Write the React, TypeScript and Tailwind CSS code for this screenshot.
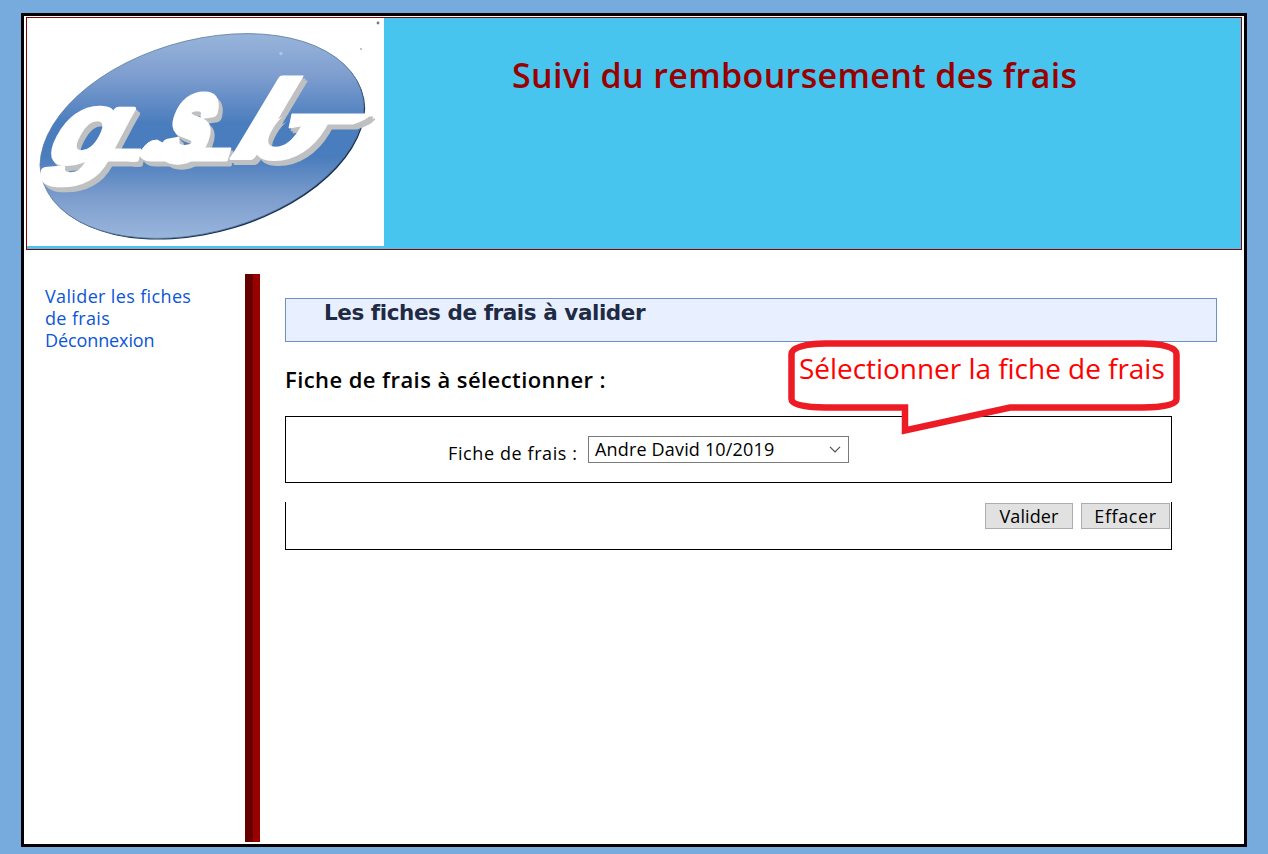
import type { ReactNode } from "react";

const linkClass = "text-[#0b55d9] hover:underline";

const ovalPath = "M13 147A166 97.5 -15.6 0 1 337 89A166 97.5 -15.6 0 1 13 147Z";

function Logo() {
  const letters = (
    <g fontFamily="'Liberation Sans', sans-serif" fontWeight="bold" strokeLinejoin="round">
      <text transform="translate(14 145) skewX(-28) scale(1.38 1.2)" fontSize="84" strokeWidth="5">g</text>
      <text transform="translate(130 141) skewX(-20) scale(0.9 1.3)" fontSize="90" strokeWidth="7">s</text>
      <g clipPath="url(#bowl)">
        <text transform="translate(196 140) skewX(-31) scale(1.3 1)" fontSize="111" strokeWidth="4">b</text>
      </g>
    </g>
  );
  const swashes = (
    <g strokeWidth="1">
      <path d="M84 131H114L111 143Q105 144 101 143H76Z" />
      <path d="M112 137Q119 122 130 122L145 130H204L200 143H124Q116 143 112 137Z" />
      <path d="M265 96H344Q341 101 326 106H285L262 110Z" />
    </g>
  );
  return (
    <svg viewBox="0 0 357 228" className="block h-[228px] w-[357px] bg-white" role="img" aria-label="gsb">
      <defs>
        <linearGradient id="oval" gradientUnits="userSpaceOnUse" x1="0" y1="14" x2="0" y2="222">
          <stop offset="0" stopColor="#98b5da" />
          <stop offset="0.2" stopColor="#809fd0" />
          <stop offset="0.44" stopColor="#4a7dbd" />
          <stop offset="0.6" stopColor="#4a7dbd" />
          <stop offset="0.8" stopColor="#7d9dcd" />
          <stop offset="1" stopColor="#9ab7dc" />
        </linearGradient>
        <clipPath id="bowl">
          <path d="M190 150V125L225 45H284.5L251 101L262 96H330V150Z" />
        </clipPath>
      </defs>
      <path d={ovalPath} fill="#142f55" transform="translate(1.2 1.2)" />
      <path d={ovalPath} fill="url(#oval)" stroke="#58799f" strokeWidth="0.8" />
      <g fill="#bfc0c2" stroke="#bfc0c2" transform="translate(4 5)">{letters}{swashes}</g>
      <g fill="#bfc0c2" stroke="#bfc0c2" transform="translate(2 3)">{letters}{swashes}</g>
      <g fill="#fff" stroke="#fff">{letters}{swashes}</g>
      <circle cx="351" cy="5" r="1.4" fill="#777" />
      <circle cx="334" cy="31" r="0.9" fill="#aaa" />
      <circle cx="254" cy="35.5" r="1.7" fill="#a9c8e6" />
    </svg>
  );
}

function FormButton({ children, className }: { children: ReactNode; className: string }) {
  return (
    <button className={`flex h-[26px] items-center justify-center border border-[#adadad] bg-[#e1e1e1] pb-px text-[18px] leading-none whitespace-nowrap ${className}`}>
      {children}
    </button>
  );
}

export default function App() {
  return (
    <div className="h-[854px] w-[1268px] overflow-hidden bg-[#77aadd] pt-[13px] pl-[21px] font-['Open_Sans','Noto_Sans',sans-serif] text-[18px] text-black">
      <div className="flex h-[834px] w-[1226px] flex-col border-[3px] border-black bg-white px-[2px] pt-px pb-[2px]">
        <header className="flex h-[233px] shrink-0 border border-[#8b0000] bg-[#48c5ee]">
          <Logo />
          <h1 className="ml-[128px] h-fit pt-[33px] text-[34px] leading-[48px] font-semibold tracking-[0.37px] whitespace-nowrap text-[#990000]">
            Suivi du remboursement des frais
          </h1>
        </header>

        <div className="mt-6 flex min-h-0 flex-1">
          <nav className="w-[219px] shrink-0 pt-[11px] pl-[19px] leading-[22px] whitespace-nowrap">
            <a className={`${linkClass} tracking-[0.36px]`}>Valider les fiches<br />de frais</a>
            <br />
            <a className={`${linkClass} tracking-[-0.1px]`}>Déconnexion</a>
          </nav>
          <div className="w-[15px] shrink-0 border-l-8 border-[#660000] bg-[#990000]" />

          <main className="relative ml-[25px] w-[932px] pt-6">
            <h2 className="h-11 border border-[#6f8fc5] bg-[#e8f0ff] pl-[38px] font-['DejaVu_Sans',sans-serif] text-[21.5px] leading-[28px] font-bold tracking-[-0.43px] whitespace-nowrap text-[#1f2a44]">
              Les fiches de frais à valider
            </h2>
            <h3 className="mt-[23px] h-[28px] text-[22px] leading-[28px] font-semibold tracking-[0.43px] whitespace-nowrap">
              Fiche de frais à sélectionner :
            </h3>
            <div className="mt-[23px] flex h-[67px] w-[887px] border border-black pt-[19px] pl-[162px]">
              <label className="w-[140px] pt-[5px] leading-[24px] tracking-[0.6px] whitespace-nowrap">Fiche de frais :</label>
              <button className="flex h-[27px] w-[261px] items-center justify-between border border-[#7a7a7a] bg-white pr-[7px] pl-[6px] leading-[25px] tracking-[0.17px] whitespace-nowrap">
                <span>Andre David 10/2019</span>
                <svg className="h-[7px] w-3" viewBox="0 0 12 7" fill="none" stroke="#505050" strokeWidth="1.2">
                  <path d="M1 .8 6 5.8 11 .8" />
                </svg>
              </button>
            </div>
            <div className="mt-[19px] flex h-[48px] w-[887px] justify-end gap-2 border-x border-b border-black pt-px pr-px">
              <FormButton className="w-[88px] tracking-[0.1px]">Valider</FormButton>
              <FormButton className="w-[89px] tracking-[0.6px]">Effacer</FormButton>
            </div>

            <div className="absolute top-[66px] left-[503px] h-[96px] w-[394px]">
              <svg className="absolute inset-0" width="394" height="96" viewBox="0 0 394 96">
                <path
                  d="M38 3.5H354C375 3.5 388.5 8 388.5 14V59C388.5 65 375 67.5 354 67.5H222L117 90.5V67.5H38C17 67.5 3.5 65 3.5 59V14C3.5 8 17 3.5 38 3.5Z"
                  fill="#fff"
                  stroke="#ed1c24"
                  strokeWidth="6.5"
                />
              </svg>
              <p className="relative pt-[9px] pl-[11px] text-[28px] leading-[38px] tracking-[-0.04px] whitespace-nowrap text-[#ff0000]">
                Sélectionner la fiche de frais
              </p>
            </div>
          </main>
        </div>
      </div>
    </div>
  );
}
